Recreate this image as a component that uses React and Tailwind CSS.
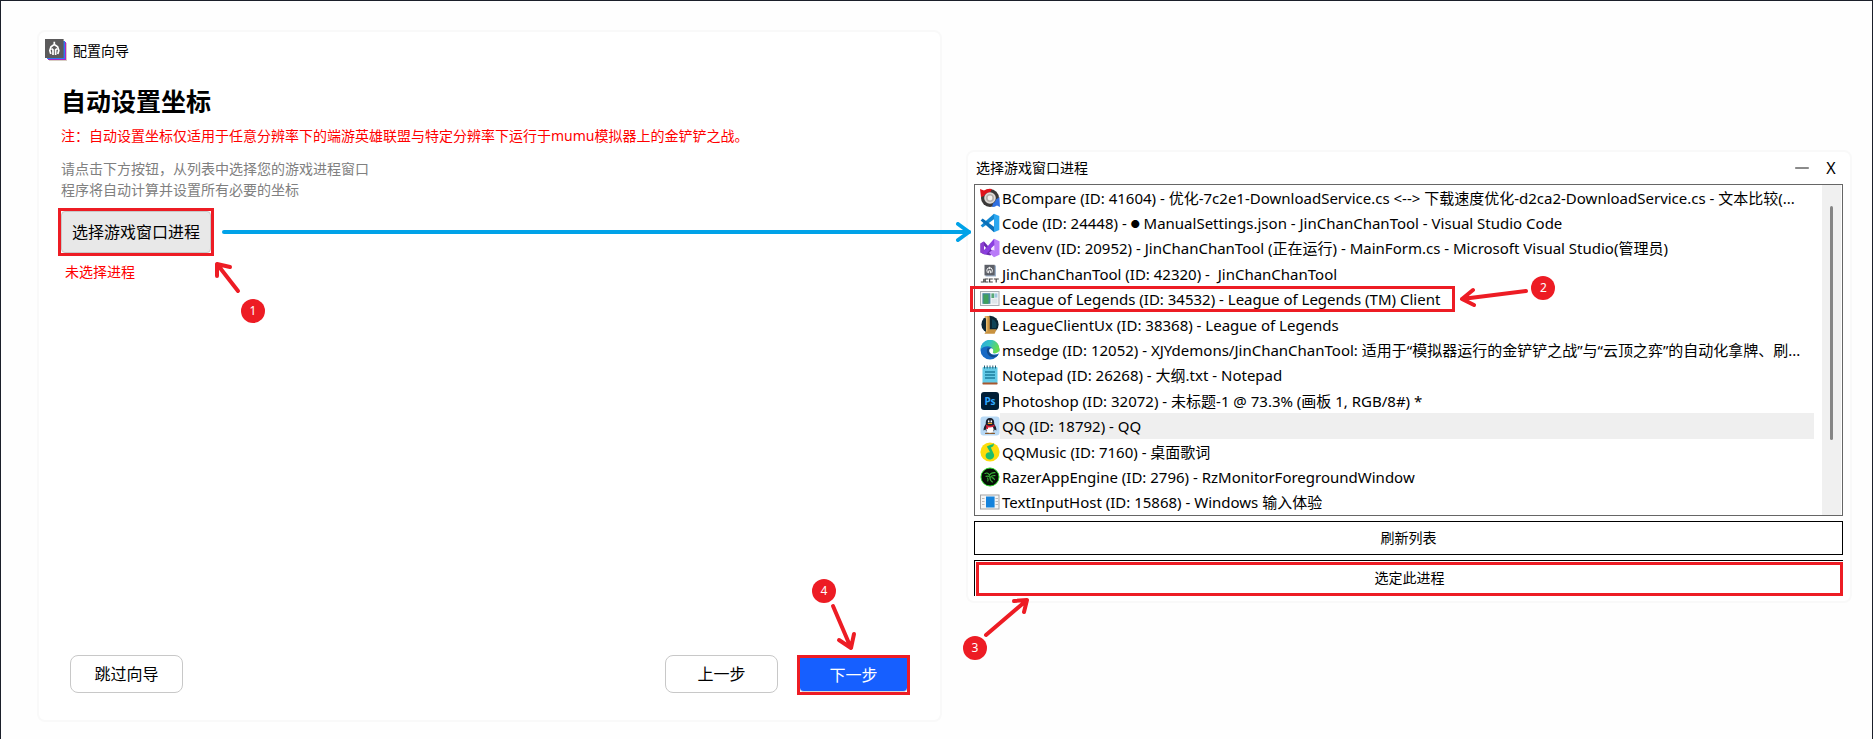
import { Minus } from "lucide-react";

const BCompareIcon = () => (
    <svg viewBox="0 0 20 20" className="size-5">
        <circle cx="10" cy="10" r="9" fill="#3a3838" />
        <path d="M0 1L4 2.6A10 10 0 0 1 12 1L10 4.4A7 7 0 0 0 4 8L1 9Z" fill="#e0131b" />
        <path d="M20 19L17 17.4A10 10 0 0 1 12 19L13 15.6A7 7 0 0 0 16 11.4L19.4 9Z" fill="#2f6fe0" />
        <circle cx="10" cy="10" r="5.8" fill="#dedad6" />
        <circle cx="10" cy="10" r="4" fill="#b5b0ac" />
        <circle cx="10" cy="10" r="2.4" fill="#f4f2f0" />
    </svg>
);

const CodeIcon = () => (
    <svg viewBox="0 0 20 20" className="size-5">
        <path d="M14 0.8L0.6 12.4L2.6 14.6L15 5.4Z" fill="#1388d2" />
        <path d="M14 19.2L0.6 7.6L2.6 5.4L15 14.6Z" fill="#0a6fb8" />
        <path d="M14 0.8L19.3 3V17L14 19.2Z" fill="#2ba7f0" />
    </svg>
);

const DevenvIcon = () => (
    <svg viewBox="0 0 20 20" className="size-5">
        <path d="M0.5 5.4L4 3.6L13 13.5L10.5 17.5L4 16.2L0.5 14.4Z" fill="#6b2bb0" />
        <path d="M0.5 5.4L4 3.6V16.2L0.5 14.4Z" fill="#8b3fd0" />
        <path d="M4 7.8V12.2L6.2 10Z" fill="#fff" />
        <path d="M14 0.8L19.5 3.2V16.8L14 19.2L9 14.8L14 10.5Z" fill="#b97bf8" />
        <path d="M14 0.8L4 12.4V16.2L6.4 16L14.4 7Z" fill="#8a3ee0" />
        <path d="M14.4 7.4V12.8L11 10.2Z" fill="#f3e8ff" />
    </svg>
);

const JcctIcon = () => (
    <svg viewBox="0 0 20 20" className="size-5">
        <rect x="5.5" y="1.5" width="10.5" height="11" fill="#9fb3cc" />
        <rect x="4.5" y="0.8" width="10.2" height="10.6" fill="#5d6068" />
        <path d="M7.4 8.8L6.8 6L8 4H11.2L12.4 6L11.8 8.8M9.6 2.8V5.2M8.6 9.2V6.8H10.6V9.2" fill="none" stroke="#f3f3f3" strokeWidth="1" />
        <path
            d="M3.8 14.8V18H0.8M8.4 15H5.2V18H8.4M12.8 15H9.6V18H12.8M13.8 15H18.8M16.2 15V18.6"
            fill="none"
            stroke="#444"
            strokeWidth="1.2"
        />
    </svg>
);

const LeagueIcon = () => (
    <svg viewBox="0 0 20 20" className="size-5">
        <rect x="0.5" y="2.5" width="18.5" height="14" fill="#f3f5f7" stroke="#a9adb2" />
        <rect x="2.4" y="4.2" width="8" height="10.6" fill="#4688a0" />
        <rect x="3.5" y="5.4" width="5" height="9.4" fill="#3fa05c" />
        <rect x="11.4" y="4.4" width="2.8" height="4.6" fill="#58a878" />
        <rect x="14.6" y="4.4" width="2.8" height="4.2" fill="#9fc7e0" />
        <rect x="11.6" y="9.6" width="5.8" height="5" fill="#dfe6ea" />
    </svg>
);

const LeagueClientIcon = () => (
    <svg viewBox="0 0 20 20" className="size-5">
        <circle cx="10" cy="9.4" r="8.6" fill="#0b2634" />
        <path d="M12 4A6.4 6.4 0 0 1 16 13L12 13Z" fill="#0f4458" />
        <path d="M4.6 1H9.4L9.8 2.4V14.2H16.6L14.6 18.8H4.4L6 16.4V3.8Z" fill="#c9923f" />
        <path d="M4.6 1L7.4 1.6V16.4L6 16.4V3.8Z" fill="#e9bd72" />
    </svg>
);

const EdgeIcon = () => (
    <svg viewBox="0 0 20 20" className="size-5">
        <defs>
            <linearGradient id="edge-top" x1="0" y1="0" x2="1" y2="0.4">
                <stop offset="0" stopColor="#2ba5e2" />
                <stop offset="0.5" stopColor="#34c2c4" />
                <stop offset="1" stopColor="#66dd4e" />
            </linearGradient>
        </defs>
        <circle cx="10" cy="10" r="9.5" fill="#1769c4" />
        <path d="M0.5 9.5A9.5 9.5 0 0 1 19.5 9C19.8 12.8 16.5 14 13.5 13.3C11.8 12.8 13.4 11.6 13 9.4C12.4 6 5 4.2 0.5 9.5Z" fill="url(#edge-top)" />
        <path d="M8 7.8C5.8 9.8 6.4 16 12.6 17.2C15 17.5 17.4 16.4 18.4 14.8C15.4 16.6 10.4 15 9.4 11.8C9 10.4 9.4 9 10.4 8Z" fill="#114a8b" />
        <path d="M9.2 10.2C9 13.6 13 15.8 18.6 13.8L19.5 10.8C17 14 13.6 13.6 13 13C12.6 12.4 13.6 11.4 13 9.2C12 7.4 9.6 8 9.2 10.2Z" fill="#fff" />
    </svg>
);

const NotepadIcon = () => (
    <svg viewBox="0 0 20 20" className="size-5">
        <rect x="2.5" y="2" width="15" height="17" rx="1" fill="#63cbe8" />
        <rect x="2.5" y="17.6" width="15" height="1.8" rx="0.6" fill="#a8572e" />
        <path d="M4.5 0.5V3.5M7.2 0.5V3.5M10 0.5V3.5M12.8 0.5V3.5M15.5 0.5V3.5" stroke="#26586e" />
        <path d="M5 7H15M5 10H15M5 13H15" stroke="#1b7f9f" strokeWidth="1.3" />
    </svg>
);

const PhotoshopIcon = () => (
    <span className="flex size-[18px] items-center justify-center rounded-[3px] bg-[#001e36] text-[10px] leading-none font-bold text-[#31a8ff]">
        Ps
    </span>
);

const QQIcon = () => (
    <svg viewBox="0 0 20 20" className="size-5">
        <rect x="0.5" y="0.5" width="19" height="19" rx="3" fill="#b8d9f5" />
        <path d="M10 2C6.6 2 5.6 4.6 5.8 8C4.4 10 3.4 12 3.6 14.4L5.4 13.4C6 17 14 17 14.6 13.4L16.4 14.4C16.6 12 15.6 10 14.2 8C14.4 4.6 13.4 2 10 2Z" fill="#1c2230" />
        <ellipse cx="10" cy="13.6" rx="3.6" ry="3.6" fill="#fff" />
        <ellipse cx="8.7" cy="5.4" rx="0.8" ry="1.1" fill="#fff" />
        <ellipse cx="11.3" cy="5.4" rx="0.8" ry="1.1" fill="#fff" />
        <ellipse cx="10" cy="7.4" rx="2.4" ry="0.6" fill="#f5a623" />
        <path d="M5.6 8.6Q10 11 14.4 8.6L14.6 10.2Q10 12 8 11.4V13H6.4V10.8Z" fill="#e0203a" />
        <path d="M5.6 17.4H9.4M10.6 17.4H14.4" stroke="#8a5a2a" strokeWidth="1.2" strokeLinecap="round" />
    </svg>
);

const QQMusicIcon = () => (
    <svg viewBox="0 0 20 20" className="size-5">
        <circle cx="10" cy="10" r="9.6" fill="#fddc0c" />
        <path d="M13.8 1.2C12.6 2.6 9.6 3 6.8 4.4L10.2 10.4C7.4 10 5.4 11.8 5.6 14C5.8 16.4 8 17.6 10.4 17.4C13 17.2 14.6 15.2 14 12.6L10.8 5.4C12.6 5 14.2 4 13.8 1.2Z" fill="#1ebd6d" />
    </svg>
);

const RazerIcon = () => (
    <svg viewBox="0 0 20 20" className="size-5">
        <circle cx="10" cy="10" r="9" fill="#071007" stroke="#2bd42b" strokeWidth="1" />
        <path
            d="M5 6.4Q8 5 9.4 8.2Q11 5.4 15 5.6M6 9.4Q9 8.6 10 10.4Q12 8.2 15 8.6M10 10.4Q9.6 13 12.4 15M12 10.6Q14 11 14.4 12.6M7.6 11Q8.4 12.6 7.8 14"
            fill="none"
            stroke="#36b336"
            strokeWidth="1.1"
            strokeLinecap="round"
        />
    </svg>
);

const TextInputIcon = () => (
    <svg viewBox="0 0 20 20" className="size-5">
        <rect x="0.5" y="3" width="18.5" height="14" fill="#f5f5f5" stroke="#a3a3a3" />
        <path d="M2 6.5H4.5M2 9.5H4.5M2 12.5H4.5M15.5 6.5H18M15.5 9.5H18M15.5 12.5H18" stroke="#b9b9b9" />
        <rect x="6" y="4.5" width="8.6" height="11" fill="#1583dc" />
    </svg>
);

const WizardIcon = () => (
    <svg viewBox="0 0 22 22" className="size-[22px]">
        <rect x="4" y="4" width="18" height="18" fill="#d8cdc2" />
        <rect x="3" y="3" width="18" height="18" fill="#b023c4" />
        <rect x="2" y="2" width="18" height="18" fill="#2f7af0" />
        <rect x="0" y="0" width="18.6" height="19" fill="#5b5a5b" />
        <path
            d="M5.8 15L4.8 11.4L6 7.8L8.4 6H10.2L12.6 7.8L13.8 11.4L12.8 15M9.3 2.8V6.4M8 16V10.8L6.6 9.6M10.6 16V10.8L12 9.6"
            fill="none"
            stroke="#fff"
            strokeWidth="1.7"
        />
    </svg>
);

const PROCESSES = [
    {
        icon: BCompareIcon,
        id: 41604,
        name: "BCompare (ID: 41604) - 优化-7c2e1-DownloadService.cs <--> 下载速度优化-d2ca2-DownloadService.cs - 文本比较(...",
    },
    {
        icon: CodeIcon,
        id: 24448,
        name: (
            <>
                Code (ID: 24448) - <span className="align-[2px] text-[9px]">●</span> ManualSettings.json - JinChanChanTool - Visual Studio Code
            </>
        ),
    },
    { icon: DevenvIcon, id: 20952, name: "devenv (ID: 20952) - JinChanChanTool (正在运行) - MainForm.cs - Microsoft Visual Studio(管理员)" },
    { icon: JcctIcon, id: 42320, name: "JinChanChanTool (ID: 42320) -  JinChanChanTool" },
    { icon: LeagueIcon, id: 34532, name: "League of Legends (ID: 34532) - League of Legends (TM) Client", marked: true },
    { icon: LeagueClientIcon, id: 38368, name: "LeagueClientUx (ID: 38368) - League of Legends" },
    {
        icon: EdgeIcon,
        id: 12052,
        name: "msedge (ID: 12052) - XJYdemons/JinChanChanTool: 适用于“模拟器运行的金铲铲之战”与“云顶之弈”的自动化拿牌、刷...",
    },
    { icon: NotepadIcon, id: 26268, name: "Notepad (ID: 26268) - 大纲.txt - Notepad" },
    { icon: PhotoshopIcon, id: 32072, name: "Photoshop (ID: 32072) - 未标题-1 @ 73.3% (画板 1, RGB/8#) *" },
    { icon: QQIcon, id: 18792, name: "QQ (ID: 18792) - QQ", hovered: true },
    { icon: QQMusicIcon, id: 7160, name: "QQMusic (ID: 7160) - 桌面歌词" },
    { icon: RazerIcon, id: 2796, name: "RazerAppEngine (ID: 2796) - RzMonitorForegroundWindow" },
    { icon: TextInputIcon, id: 15868, name: "TextInputHost (ID: 15868) - Windows 输入体验" },
];

// Numbered marker with its arrow, placed by the caller next to the control it explains
const Step = ({ number, className, badgeClassName, path }) => (
    <div className={`pointer-events-none absolute z-10 ${className}`}>
        <svg className="size-full overflow-visible" fill="none" stroke="#ed1c24" strokeWidth="4" strokeLinecap="round" strokeLinejoin="round">
            <path d={path} />
        </svg>
        <span
            className={`absolute flex size-6 items-center justify-center rounded-full bg-[#ed1c24] text-xs text-white ${badgeClassName}`}
        >
            {number}
        </span>
    </div>
);

const WizardWindow = () => (
    <section className="flex min-h-[692px] min-w-0 flex-col rounded-lg border-2 border-[#f9f9f9] bg-white">
        <header className="flex items-center gap-[6px] px-[6px] pt-[7px] text-sm">
            <WizardIcon />
            <span className="pt-[2px]">配置向导</span>
        </header>

        <div className="flex flex-col items-start pt-[22px] pl-[22px]">
            <h1 className="text-[25px] leading-9 font-bold">自动设置坐标</h1>
            <p className="mt-[7px] text-sm leading-5 text-[#ff0000]">
                注：自动设置坐标仅适用于任意分辨率下的端游英雄联盟与特定分辨率下运行于mumu模拟器上的金铲铲之战。
            </p>
            <p className="mt-3 text-sm leading-[21px] text-[#808080]">
                请点击下方按钮，从列表中选择您的游戏进程窗口
                <br />
                程序将自动计算并设置所有必要的坐标
            </p>
            <div className="relative mt-2 -ml-[3px] border-[3px] border-[#ed1c24]">
                <button className="h-[42px] w-[150px] rounded border border-[#c8c8c8] bg-[#e8e8e8] text-base">
                    选择游戏窗口进程
                </button>
                <Step
                    number={1}
                    className="top-[49px] left-[151px] h-10 w-8"
                    badgeClassName="top-[39px] left-[29px]"
                    path="M26 31L5 4M18 7L5 4L5 16"
                />
            </div>
            <p className="mt-[6px] pl-1 text-sm leading-5 text-[#ff0000]">未选择进程</p>
        </div>

        <footer className="mt-auto flex items-end pr-[30px] pb-[25px] pl-[31px] text-base">
            <button className="mb-[2px] h-[38px] w-[113px] rounded-lg border border-[#c8c8c8]">跳过向导</button>
            <button className="mr-[19px] mb-[2px] ml-auto h-[38px] w-[113px] rounded-lg border border-[#c8c8c8]">
                上一步
            </button>
            <div className="relative border-[3px] border-[#ed1c24]">
                <button className="block h-[34px] w-[107px] rounded-b border-b border-[#d8d8d8] bg-[#165fff] text-white">
                    下一步
                </button>
                <Step
                    number={4}
                    className="-top-[53px] left-[32px] h-12 w-6"
                    badgeClassName="-top-[26px] -left-[20px]"
                    path="M1 1L19 43M7 35L19 43L22 29"
                />
            </div>
        </footer>
    </section>
);

const ProcessRow = ({ icon: Icon, name, hovered, marked }) => (
    <li className="flex min-w-0 items-center">
        <span className="flex w-5 shrink-0 justify-center">
            <Icon />
        </span>
        <span className={`flex h-full min-w-0 flex-1 items-center pl-[2px] ${hovered ? "bg-[#efefef]" : ""}`}>
            <span className="relative whitespace-pre">
                {name}
                {marked && (
                    <>
                        <span className="pointer-events-none absolute -inset-y-[2px] -right-[15px] -left-[32px] border-[3px] border-[#ed1c24]" />
                        <Step
                            number={2}
                            className="top-[2px] left-full ml-[22px] h-5 w-16"
                            badgeClassName="-top-[14px] left-[69px]"
                            path="M64 1L0 9M11 0L0 9L12 15"
                        />
                    </>
                )}
            </span>
        </span>
    </li>
);

const ProcessWindow = () => (
    <section className="mt-[120px] flex min-w-0 flex-col self-start rounded-lg border-2 border-[#f9f9f9] bg-white pr-[7px] pb-[5px] pl-[6px] text-sm">
        <header className="flex h-8 items-center pr-[2px] pl-[2px]">
            <span className="flex-1">选择游戏窗口进程</span>
            <button aria-label="最小化" className="flex w-6 justify-center">
                <Minus size={22} strokeWidth={1} className="shrink-0" />
            </button>
            <button aria-label="关闭" className="ml-[7px] w-5 text-base">
                X
            </button>
        </header>

        <div className="flex h-[332px] border border-[#666] pr-px">
            <ul className="grid min-w-0 flex-1 auto-rows-fr pr-2 pl-[5px] text-[15px] leading-[22px]">
                {PROCESSES.map((process) => (
                    <ProcessRow key={process.id} {...process} />
                ))}
            </ul>
            <div className="flex w-[19px] justify-center bg-[#f0f0f0] pt-[21px]">
                <div className="h-[234px] w-[3px] rounded-full bg-[#858585]" />
            </div>
        </div>

        <button className="mt-[5px] h-[34px] border border-black">刷新列表</button>
        <div className="relative mt-[5px] border-t border-l border-black pt-px pl-px">
            <button className="block h-[34px] w-full border-[3px] border-[#ed1c24] pb-[2px]">选定此进程</button>
            <Step
                number={3}
                className="top-[37px] left-[9px] h-10 w-11"
                badgeClassName="top-[38px] -left-[21px]"
                path="M2 37L43 2M30 3L43 2L40 14"
            />
        </div>
    </section>
);

export default function App() {
    return (
        <main className="relative min-h-screen border border-b-0 border-[#1b1f2a] bg-[#fefefe] pt-[29px] pr-5 pb-4 pl-9 font-['Noto_Sans','Noto_Sans_CJK_SC',sans-serif] text-black">
            <div className="grid grid-cols-[905fr_886fr] gap-6">
                <WizardWindow />
                <ProcessWindow />
            </div>

            {/* link from the wizard button to the process picker */}
            <div className="pointer-events-none absolute top-[221px] right-[901px] left-[221px] flex items-center">
                <div className="h-1 flex-1 rounded-full bg-[#00a2e8]" />
                <svg viewBox="0 0 16 20" className="-ml-4 h-5 w-4" fill="none" stroke="#00a2e8" strokeWidth="4" strokeLinecap="round" strokeLinejoin="round">
                    <path d="M3 2L14 10L3 18" />
                </svg>
            </div>
        </main>
    );
}
